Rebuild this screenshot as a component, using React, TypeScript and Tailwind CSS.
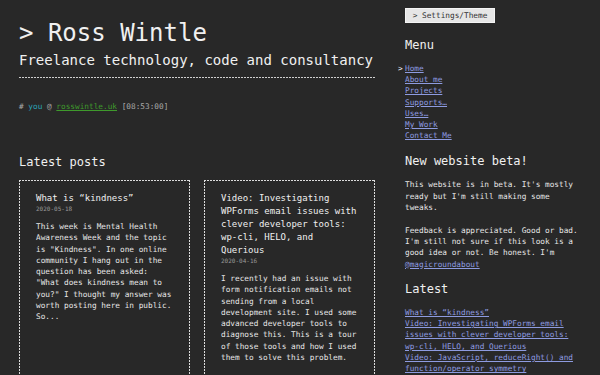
import React from "react";

const mono = "font-['DejaVu_Sans_Mono','Liberation_Mono',monospace]";
const dashedBox =
  "[background-image:repeating-linear-gradient(90deg,#dcdcdc_0_2px,transparent_2px_3px),repeating-linear-gradient(90deg,#dcdcdc_0_2px,transparent_2px_3px),repeating-linear-gradient(180deg,#dcdcdc_0_2px,transparent_2px_3px),repeating-linear-gradient(180deg,#dcdcdc_0_2px,transparent_2px_3px)] [background-size:100%_1px,100%_1px,1px_100%,1px_100%] [background-position:top,bottom,left,right] bg-no-repeat";

const link = "text-[#8e9be0] underline underline-offset-[1px]";

function Card({ title, date, body }: { title: string; date: string; body: string }) {
  return (
    <div className={`${dashedBox} min-h-[230px] px-[17px] pt-[12px] pb-4`}>
      <h3 className="text-[9px] leading-[13px] text-[#f0f0f0]">{title}</h3>
      <div className="text-[6px] leading-[8px] text-[#9a9a9a]">{date}</div>
      <p className="mt-[8px] text-[7.75px] leading-[11.3px] text-[#e6e6e6]">{body}</p>
    </div>
  );
}

export default function App() {
  const menu = ["Home", "About me", "Projects", "Supports…", "Uses…", "My Work", "Contact Me"];
  const latest = [
    "What is \u201Ckindness\u201D",
    "Video: Investigating WPForms email issues with clever developer tools: wp-cli, HELO, and Querious",
    "Video: JavaScript, reduceRight() and function/operator symmetry",
    "Video: Using the WordPress block editor for notes",
  ];
  return (
    <div className={`${mono} w-[600px] h-[375px] overflow-hidden bg-[#282828] text-[#f0f0f0] flex pl-[19px]`}>
      <main className="w-[356px] shrink-0">
        <h1 className="pt-[19px] text-[24px] leading-[28px]">&gt; Ross Wintle</h1>
        <p className="mt-[3px] text-[14px] leading-[20px]">Freelance technology, code and consultancy</p>
        <div className="mt-[7px] h-px bg-[repeating-linear-gradient(90deg,#d0d0d0_0_2px,transparent_2px_3px)]" />
        <div className="mt-[23px] text-[7.75px] leading-[11px] text-[#a8a8a8]">
          # <span className="text-[#2ba3b8]">you</span> @{" "}
          <span className="text-[#3f9a2c] underline">rosswintle.uk</span> [08:53:00]
        </div>
        <h2 className="mt-[42px] text-[12px] leading-[16px]">Latest posts</h2>
        <div className="mt-[10px] grid grid-cols-2 gap-[14px]">
          <Card
            title={"What is \u201Ckindness\u201D"}
            date="2020-05-18"
            body={
              'This week is Mental Health Awareness Week and the topic is "Kindness". In one online community I hang out in the question has been asked: "What does kindness mean to you?" I thought my answer was worth posting here in public. So...'
            }
          />
          <Card
            title="Video: Investigating WPForms email issues with clever developer tools: wp-cli, HELO, and Querious"
            date="2020-04-16"
            body="I recently had an issue with form notification emails not sending from a local development site. I used some advanced developer tools to diagnose this. This is a tour of those tools and how I used them to solve this problem."
          />
        </div>
      </main>
      <aside className="ml-[30px] w-[180px] shrink-0">
        <button className="mt-[8px] h-[15px] w-[90px] bg-[#e6e6e6] border border-[#f4f4f4] text-[7.75px] leading-[13px] text-[#333] text-center">
          &gt; Settings/Theme
        </button>
        <h2 className="mt-[12px] text-[12px] leading-[16px]">Menu</h2>
        <ul className="mt-[10px] text-[7.75px] leading-[11.2px]">
          {menu.map((m, i) => (
            <li key={m} className="flex">
              {i === 0 && <span className="-ml-[7px] w-[7px] text-[#f0f0f0]">&gt;</span>}
              <a className={link}>{m}</a>
            </li>
          ))}
        </ul>
        <h2 className="mt-[12px] text-[12px] leading-[16px]">New website beta!</h2>
        <div className="mt-[10px] text-[7.75px] leading-[11.3px] text-[#e6e6e6]">
          <p>This website is in beta. It's mostly ready but I'm still making some tweaks.</p>
          <p className="mt-[11.3px]">
            Feedback is appreciated. Good or bad. I'm still not sure if this look is a good idea or not. Be honest. I'm{" "}
            <a className={link}>@magicroundabout</a>
          </p>
        </div>
        <h2 className="mt-[11px] text-[12px] leading-[16px]">Latest</h2>
        <ul className="mt-[10px] text-[7.75px] leading-[11.3px]">
          {latest.map((l) => (
            <li key={l}>
              <a className={link}>{l}</a>
            </li>
          ))}
        </ul>
      </aside>
    </div>
  );
}
